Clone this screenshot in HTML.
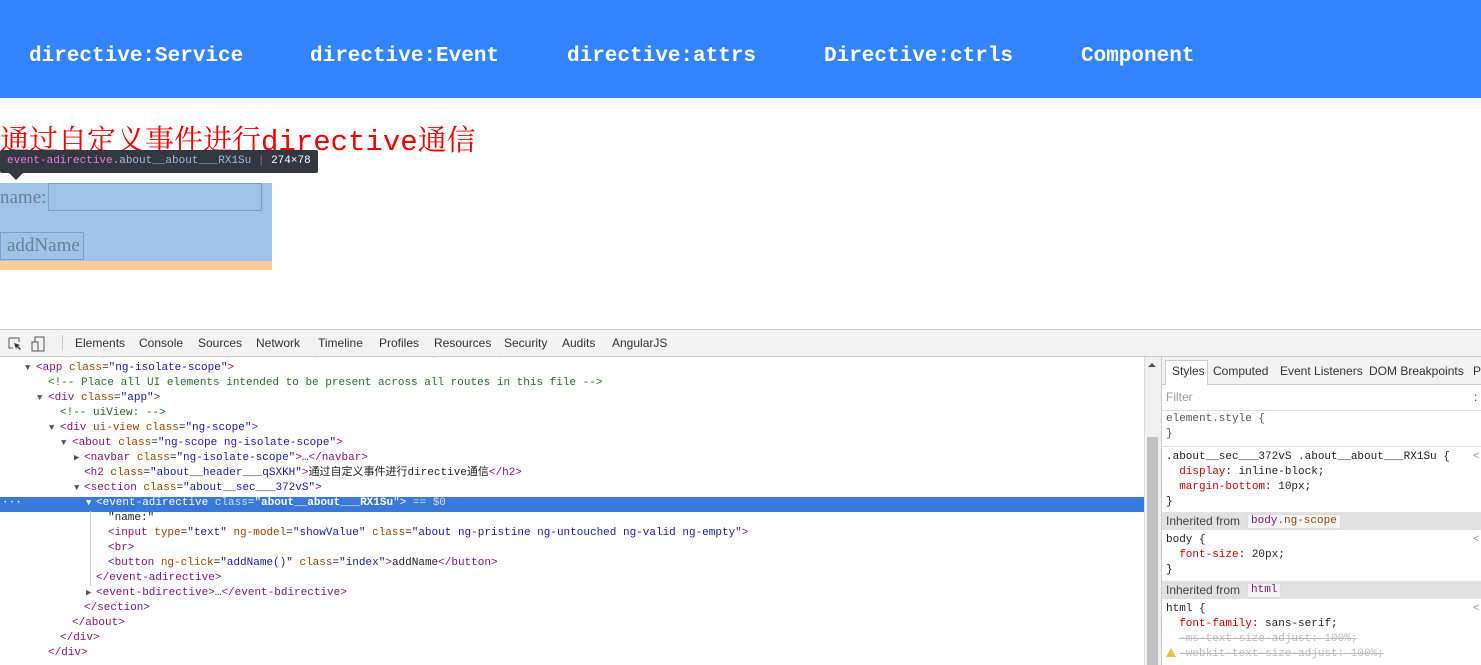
<!DOCTYPE html>
<html><head><meta charset="utf-8"><style>
*{margin:0;padding:0;box-sizing:border-box}
body{width:1481px;height:665px;overflow:hidden;background:#fff;position:relative;font-family:"Liberation Sans",sans-serif}
.nav{position:absolute;left:0;top:0;width:1481px;height:98px;background:#3385ff}
.nav span{position:absolute;top:42px;color:#fff;font:bold 21px/30px "Liberation Mono","Noto Serif CJK SC",monospace;white-space:nowrap}
.abs{position:absolute;white-space:nowrap}
h2{position:absolute;left:0;top:125px;color:#e00;font:normal 29px/36px "Liberation Mono","Noto Serif CJK SC",serif;letter-spacing:0;white-space:nowrap}
.code{font:11px/15px "Liberation Mono",monospace;color:#222}
.t{color:#881280}.a{color:#994500}.v{color:#1a1aa6}.c{color:#236e25}.g{color:#aaa}
.tri{position:absolute;font-size:9px;color:#555}
.st{font:11px/15px "Liberation Mono",monospace;color:#222}
.ui{font:12px/15px "Liberation Sans",sans-serif;color:#333}
.p{color:#c80000}
</style></head><body>
<div class="nav">
<span style="left:29px">directive:Service</span>
<span style="left:310px">directive:Event</span>
<span style="left:567px">directive:attrs</span>
<span style="left:824px">Directive:ctrls</span>
<span style="left:1081px">Component</span>
</div>
<h2>通过自定义事件进行directive通信</h2>
<div class="abs" style="left:0;top:183px;width:272px;height:78px;background:#9fc4e7"></div>
<div class="abs" style="left:0;top:261px;width:272px;height:9px;background:#f9cc9d"></div>
<div class="abs" style="left:0;top:185px;color:#6a7f99;font:19px/26px 'Liberation Serif',serif">name:</div>
<div class="abs" style="left:48px;top:183px;width:214px;height:28px;border:1px solid #7d9fc4"></div>
<div class="abs" style="left:0;top:232px;width:84px;height:28px;border:1px solid #7d9fc4;color:#6a7f99;font:19px/26px 'Liberation Serif',serif;padding-left:6px">addName</div>
<div class="abs" style="left:0;top:150px;width:318px;height:23px;background:#333740;border-radius:2px;font:11px/23px 'Liberation Mono',monospace;color:#fff;padding-left:7px"><span style="color:#ee78e6">event-adirective</span><span style="color:#9bbbdc">.about__about___RX1Su</span> <span style="color:#777">|</span> 274×78</div>
<div class="abs" style="left:9px;top:173px;width:0;height:0;border-left:7px solid transparent;border-right:7px solid transparent;border-top:7px solid #333740"></div>

<!-- devtools -->
<div class="abs" style="left:0;top:357px;width:1144px;height:6px;overflow:hidden"><div class="abs code" style="left:36px;top:-11px;color:#bbb">&lt;script async src="/browser-sync/browser-sync-client.2.11.1.js"&gt;&lt;/script&gt;</div></div>
<div class="abs" style="left:0;top:329px;width:1481px;height:28px;background:#f3f3f3;border-top:1px solid #ccc;border-bottom:1px solid #ccc"></div>
<svg class="abs" style="left:6px;top:335px" width="44" height="18"><path d="M3 3h10v4M3 3v10h4" stroke="#555" fill="none"/><path d="M8 8l6 2-2 1 3 3-1 1-3-3-1 2z" fill="#333"/><rect x="29" y="2" width="9" height="14" fill="none" stroke="#555"/><rect x="26" y="7" width="6" height="9" fill="#f3f3f3" stroke="#555"/></svg>
<div class="abs" style="left:62px;top:335px;width:1px;height:16px;background:#ccc"></div>
<div class="abs ui" style="top:336px;left:75px">Elements</div>
<div class="abs ui" style="top:336px;left:139px">Console</div>
<div class="abs ui" style="top:336px;left:198px">Sources</div>
<div class="abs ui" style="top:336px;left:256px">Network</div>
<div class="abs ui" style="top:336px;left:318px">Timeline</div>
<div class="abs ui" style="top:336px;left:379px">Profiles</div>
<div class="abs ui" style="top:336px;left:434px">Resources</div>
<div class="abs ui" style="top:336px;left:504px">Security</div>
<div class="abs ui" style="top:336px;left:562px">Audits</div>
<div class="abs ui" style="top:336px;left:612px">AngularJS</div>

<div class="abs" style="left:0;top:497px;width:1144px;height:15px;background:#3879d9"></div>
<div class="code abs" style="left:0;top:361px;width:1144px">
<div style="position:absolute;top:0;left:25px"><span class="tri">▼</span></div><div class="abs" style="top:0;left:36px"><span class="t">&lt;app</span> <span class="a">class</span>=<span class="v">"ng-isolate-scope"</span><span class="t">&gt;</span></div>
<div class="abs c" style="top:15px;left:48px">&lt;!-- Place all UI elements intended to be present across all routes in this file --&gt;</div>
<div class="abs" style="top:30px;left:37px"><span class="tri">▼</span></div><div class="abs" style="top:30px;left:48px"><span class="t">&lt;div</span> <span class="a">class</span>=<span class="v">"app"</span><span class="t">&gt;</span></div>
<div class="abs c" style="top:45px;left:60px">&lt;!-- uiView: --&gt;</div>
<div class="abs" style="top:60px;left:49px"><span class="tri">▼</span></div><div class="abs" style="top:60px;left:60px"><span class="t">&lt;div</span> <span class="a">ui-view class</span>=<span class="v">"ng-scope"</span><span class="t">&gt;</span></div>
<div class="abs" style="top:75px;left:61px"><span class="tri">▼</span></div><div class="abs" style="top:75px;left:72px"><span class="t">&lt;about</span> <span class="a">class</span>=<span class="v">"ng-scope ng-isolate-scope"</span><span class="t">&gt;</span></div>
<div class="abs" style="top:90px;left:74px"><span class="tri">▶</span></div><div class="abs" style="top:90px;left:84px"><span class="t">&lt;navbar</span> <span class="a">class</span>=<span class="v">"ng-isolate-scope"</span><span class="t">&gt;</span>…<span class="t">&lt;/navbar&gt;</span></div>
<div class="abs" style="top:105px;left:84px"><span class="t">&lt;h2</span> <span class="a">class</span>=<span class="v">"about__header___qSXKH"</span><span class="t">&gt;</span><span style="font-family:'Liberation Mono','Noto Sans CJK SC',monospace">通过自定义事件进行directive通信</span><span class="t">&lt;/h2&gt;</span></div>
<div class="abs" style="top:120px;left:74px"><span class="tri">▼</span></div><div class="abs" style="top:120px;left:84px"><span class="t">&lt;section</span> <span class="a">class</span>=<span class="v">"about__sec___372vS"</span><span class="t">&gt;</span></div>
<div class="abs" style="top:135px;left:2px;color:#fff">···</div>
<div class="abs" style="top:135px;left:86px;color:#fff"><span class="tri" style="color:#fff">▼</span></div><div class="abs" style="top:135px;left:96px;color:#fff">&lt;event-adirective <span style="color:#cfe0f8">class</span>="<b>about__about___RX1Su</b>"&gt; <span style="color:#cfe0f8">== $0</span></div>
<div class="abs" style="top:150px;left:90px;width:1px;height:75px;background:#ccc"></div>
<div class="abs" style="top:150px;left:108px">"name:"</div>
<div class="abs" style="top:165px;left:108px"><span class="t">&lt;input</span> <span class="a">type</span>=<span class="v">"text"</span> <span class="a">ng-model</span>=<span class="v">"showValue"</span> <span class="a">class</span>=<span class="v">"about ng-pristine ng-untouched ng-valid ng-empty"</span><span class="t">&gt;</span></div>
<div class="abs t" style="top:180px;left:108px">&lt;br&gt;</div>
<div class="abs" style="top:195px;left:108px"><span class="t">&lt;button</span> <span class="a">ng-click</span>=<span class="v">"addName()"</span> <span class="a">class</span>=<span class="v">"index"</span><span class="t">&gt;</span>addName<span class="t">&lt;/button&gt;</span></div>
<div class="abs t" style="top:210px;left:96px">&lt;/event-adirective&gt;</div>
<div class="abs" style="top:225px;left:86px"><span class="tri">▶</span></div><div class="abs" style="top:225px;left:96px"><span class="t">&lt;event-bdirective&gt;</span>…<span class="t">&lt;/event-bdirective&gt;</span></div>
<div class="abs t" style="top:240px;left:84px">&lt;/section&gt;</div>
<div class="abs t" style="top:255px;left:72px">&lt;/about&gt;</div>
<div class="abs t" style="top:270px;left:60px">&lt;/div&gt;</div>
<div class="abs t" style="top:285px;left:48px">&lt;/div&gt;</div>
</div>

<!-- scrollbar -->
<div class="abs" style="left:1144px;top:357px;width:17px;height:308px;background:#f1f1f1;border-left:1px solid #ddd"></div>
<div class="abs" style="left:1147px;top:437px;width:11px;height:228px;background:#c1c1c1"></div>
<div class="abs" style="left:1148px;top:363px;width:0;height:0;border-left:4px solid transparent;border-right:4px solid transparent;border-bottom:4px solid #555"></div>

<!-- sidebar -->
<div class="abs" style="left:1161px;top:357px;width:320px;height:308px;background:#fff;border-left:1px solid #ccc"></div>
<div class="abs" style="left:1162px;top:357px;width:319px;height:28px;background:#f3f3f3;border-bottom:1px solid #ccc"></div>
<div class="abs" style="left:1165px;top:360px;width:43px;height:25px;background:#fff;border:1px solid #ccc;border-bottom:none"></div>
<div class="abs ui" style="top:364px;left:1172px">Styles</div>
<div class="abs ui" style="top:364px;left:1213px">Computed</div>
<div class="abs ui" style="top:364px;left:1280px">Event Listeners</div>
<div class="abs ui" style="top:364px;left:1369px">DOM Breakpoints</div>
<div class="abs ui" style="top:364px;left:1473px">P</div>
<div class="abs ui" style="top:390px;left:1166px;color:#999">Filter</div>
<div class="abs ui" style="top:390px;left:1474px;color:#333">:</div>
<div class="abs" style="left:1162px;top:410px;width:319px;height:1px;background:#ddd"></div>
<div class="abs st" style="top:412px;left:1166px;color:#555">element.style {<br>}</div>
<div class="abs" style="left:1162px;top:446px;width:319px;height:1px;background:#ddd"></div>
<div class="abs st" style="top:450px;left:1166px">.about__sec___372vS .about__about___RX1Su {<br>&nbsp;&nbsp;<span class="p">display</span>: inline-block;<br>&nbsp;&nbsp;<span class="p">margin-bottom</span>: 10px;<br>}</div>
<div class="abs st" style="top:450px;left:1473px;color:#999">&lt;</div>
<div class="abs" style="left:1162px;top:512px;width:319px;height:18px;background:#e1e1e1"></div>
<div class="abs ui" style="top:514px;left:1166px;color:#444">Inherited from</div>
<div class="abs st" style="top:514px;left:1247px;background:#f5f5f5;padding:0 3px;border:1px solid #ddd;line-height:13px"><span class="t">body</span><span style="color:#994500">.ng-scope</span></div>
<div class="abs st" style="top:533px;left:1166px">body {<br>&nbsp;&nbsp;<span class="p">font-size</span>: 20px;<br>}</div>
<div class="abs st" style="top:533px;left:1473px;color:#999">&lt;</div>
<div class="abs" style="left:1162px;top:581px;width:319px;height:18px;background:#e1e1e1"></div>
<div class="abs ui" style="top:583px;left:1166px;color:#444">Inherited from</div>
<div class="abs st" style="top:583px;left:1247px;background:#f5f5f5;padding:0 3px;border:1px solid #ddd;line-height:13px"><span class="t">html</span></div>
<div class="abs st" style="top:602px;left:1166px">html {<br>&nbsp;&nbsp;<span class="p">font-family</span>: sans-serif;<br>&nbsp;&nbsp;<s style="color:#bbb">-ms-text-size-adjust: 100%;</s><br>&nbsp;&nbsp;<s style="color:#bbb">-webkit-text-size-adjust: 100%;</s></div>
<div class="abs st" style="top:602px;left:1473px;color:#999">&lt;</div>
<div class="abs" style="top:648px;left:1166px;width:0;height:0;border-left:5px solid transparent;border-right:5px solid transparent;border-bottom:9px solid #f0c040"></div>
</body></html>
